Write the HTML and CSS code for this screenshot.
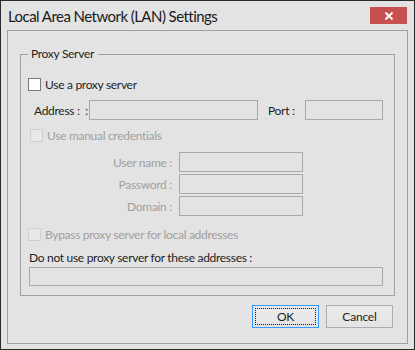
FILE: index.html
```html
<!DOCTYPE html>
<html lang="en">
<head>
  <meta charset="UTF-8">
  <title>Local Area Network (LAN) Settings</title>
  <link rel="stylesheet" href="styles.css">
</head>
<body>
  <div class="window">
    <div class="titlebar">
      <div class="title">Local Area Network (LAN) Settings</div>
      <button class="close" aria-label="Close">
        <svg width="10" height="8" viewBox="0 0 10 8"><path d="M1.5 0.5 L8.5 7.5 M8.5 0.5 L1.5 7.5" stroke="#fff" stroke-width="2"/></svg>
      </button>
    </div>
    <div class="panel">
      <fieldset class="group">
        <legend>Proxy Server</legend>

        <div class="row check-row first">
          <span class="check"></span>
          <span>Use a proxy server</span>
        </div>

        <div class="row field-row addr-row">
          <span class="addr-label"><span>Address :</span><span>:</span></span>
          <span class="box addr-input"></span>
          <span class="port-label">Port :</span>
          <span class="box port-input"></span>
        </div>

        <div class="row check-row cred disabled">
          <span class="check"></span>
          <span>Use manual credentials</span>
        </div>

        <div class="cred-fields disabled">
          <div class="row field-row">
            <span class="cred-label">User name :</span>
            <span class="box cred-input"></span>
          </div>
          <div class="row field-row">
            <span class="cred-label">Password :</span>
            <span class="box cred-input"></span>
          </div>
          <div class="row field-row">
            <span class="cred-label">Domain :</span>
            <span class="box cred-input"></span>
          </div>
        </div>

        <div class="row check-row bypass disabled">
          <span class="check"></span>
          <span>Bypass proxy server for local addresses</span>
        </div>

        <div class="row text-row">Do not use proxy server for these addresses :</div>
        <div class="box wide-input"></div>
      </fieldset>

      <div class="buttons">
        <button class="btn default"><span class="focus">OK</span></button>
        <button class="btn">Cancel</button>
      </div>
    </div>
  </div>
</body>
</html>
```

FILE: styles.css
```css
html, body {
  margin: 0;
  padding: 0;
}
body {
  font-family: Lato, "Noto Sans", sans-serif;
  font-size: 12px;
  letter-spacing: -0.3px;
  color: #1e1e1e;
  background: #e3e3e3;
}
.window {
  width: 415px;
  height: 350px;
  box-sizing: border-box;
  border: 1px solid #2b2b2b;
  background: #e3e3e3;
}
.titlebar {
  height: 29px;
  display: flex;
  justify-content: space-between;
  align-items: flex-start;
  padding-left: 7px;
}
.title {
  font-size: 15px;
  letter-spacing: -0.55px;
  line-height: 20px;
  margin-top: 5px;
  color: #1a1a1a;
}
.close {
  width: 37px;
  height: 17px;
  margin: 6px 7px 0 0;
  padding: 0;
  border: none;
  background: #c75050;
  display: flex;
  align-items: center;
  justify-content: center;
}
.close svg { display: block; }

.panel {
  margin: 0 6px;
  border: 1px solid #a0a0a0;
  padding: 15px 12px 15px 12px;
}
.group {
  margin: 0;
  padding: 0 10px 9px 7px;
  border: 1px solid #a0a0a0;
}
.group legend {
  padding: 0 4px 0 3px;
  line-height: 16px;
  color: #1e1e1e;
}
.row {
  display: flex;
  align-items: center;
  white-space: nowrap;
}
.check-row { height: 15px; margin-top: 8px; }
.check-row.first { margin-top: 15px; }
.check-row.cred { margin-top: 8px; padding-left: 2px; }
.check-row.bypass { margin-top: 11px; }
.check {
  width: 13px;
  height: 13px;
  box-sizing: border-box;
  border: 1px solid #7a7a7a;
  background: #fff;
  margin-right: 4px;
  flex: none;
}
.disabled { color: #a0a0a0; }
.disabled .check {
  border-color: #cfcfcf;
  background: #e8e8e8;
}

.box {
  display: block;
  flex: none;
  box-sizing: border-box;
  border: 1px solid #a9a9a9;
  background: #e3e3e3;
}
.field-row { height: 20px; }
.addr-row { margin-top: 8px; padding-left: 6px; }
.addr-label {
  width: 55px;
  flex: none;
  display: flex;
  justify-content: space-between;
  padding-right: 1px;
  box-sizing: border-box;
}
.addr-input { width: 169px; height: 20px; }
.port-label { margin: 0 10px; width: 27px; flex: none; }
.port-input { width: 78px; height: 20px; }

.cred-fields { margin-top: 9px; display: flex; flex-direction: column; gap: 2px; }
.cred-label {
  width: 144px;
  flex: none;
  text-align: right;
  margin-right: 7px;
}
.cred-input { width: 124px; height: 20px; }

.text-row { height: 16px; margin-top: 7px; padding-left: 1px; }
.wide-input { margin: 2px 0 0 1px; width: 354px; height: 19px; }

.buttons {
  display: flex;
  justify-content: flex-end;
  gap: 7px;
  margin-top: 9px;
  padding-right: 2px;
}
.btn {
  width: 67px;
  height: 23px;
  padding: 0;
  font-family: inherit;
  font-size: 12px;
  letter-spacing: -0.2px;
  color: #1e1e1e;
  border: 1px solid #adadad;
  background: linear-gradient(#ececec, #e4e4e4);
  display: flex;
  align-items: center;
  justify-content: center;
}
.btn.default {
  border-color: #3399ff;
  padding: 2px;
}
.focus {
  flex: 1;
  align-self: stretch;
  display: flex;
  align-items: center;
  justify-content: center;
  border: 1px dotted #1a1a1a;
}
```
